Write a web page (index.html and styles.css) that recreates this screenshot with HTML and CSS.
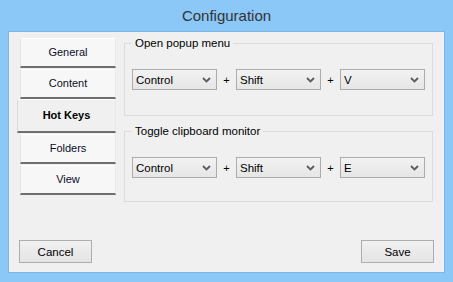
FILE: index.html
```html
<!DOCTYPE html>
<html>
<head>
<meta charset="utf-8">
<title>Configuration</title>
<link rel="stylesheet" href="styles.css">
</head>
<body>
<div class="window">
	<div class="titlebar">Configuration</div>
	<div class="client">
		<div class="main">
			<!-- left side tab list -->
			<div class="tabs">
				<div class="tab">General</div>
				<div class="tab">Content</div>
				<div class="tab selected">Hot Keys</div>
				<div class="tab">Folders</div>
				<div class="tab">View</div>
			</div>
			<div class="pages">
				<fieldset class="group">
					<legend>Open popup menu</legend>
					<div class="keys">
						<div class="combo"><span>Control</span><svg width="9" height="6" viewBox="0 0 9 6"><polyline points="1,1 4.5,4.5 8,1" /></svg></div>
						<span class="plus">+</span>
						<div class="combo"><span>Shift</span><svg width="9" height="6" viewBox="0 0 9 6"><polyline points="1,1 4.5,4.5 8,1" /></svg></div>
						<span class="plus">+</span>
						<div class="combo"><span>V</span><svg width="9" height="6" viewBox="0 0 9 6"><polyline points="1,1 4.5,4.5 8,1" /></svg></div>
					</div>
				</fieldset>
				<fieldset class="group second">
					<legend>Toggle clipboard monitor</legend>
					<div class="keys">
						<div class="combo"><span>Control</span><svg width="9" height="6" viewBox="0 0 9 6"><polyline points="1,1 4.5,4.5 8,1" /></svg></div>
						<span class="plus">+</span>
						<div class="combo"><span>Shift</span><svg width="9" height="6" viewBox="0 0 9 6"><polyline points="1,1 4.5,4.5 8,1" /></svg></div>
						<span class="plus">+</span>
						<div class="combo"><span>E</span><svg width="9" height="6" viewBox="0 0 9 6"><polyline points="1,1 4.5,4.5 8,1" /></svg></div>
					</div>
				</fieldset>
			</div>
		</div>
		<div class="actions">
			<button class="btn">Cancel</button>
			<button class="btn">Save</button>
		</div>
	</div>
</div>
</body>
</html>
```

FILE: styles.css
```css
html, body {
	margin: 0;
	padding: 0;
}

body {
	background: #8bc7f7;
	font-family: "Liberation Sans", Arial, sans-serif;
	font-size: 11px;
	color: #000;
}

.window {
	width: 453px;
	height: 282px;
	box-sizing: border-box;
	background: #8bc7f7;
	display: flex;
	flex-direction: column;
	padding: 0 8px 9px 8px;
}

.titlebar {
	height: 31px;
	line-height: 31px;
	text-align: center;
	font-size: 15px;
	color: #333333;
	flex: none;
}

.client {
	flex: 1;
	background: #f0f0f0;
	border: 1px solid #7fb5e6;
	padding: 0 11px 9px 11px;
	display: flex;
	flex-direction: column;
}

.main {
	display: flex;
	gap: 8px;
	padding-top: 5px;
}

/* tab list */
.tabs {
	width: 96px;
	flex: none;
	padding-top: 1px;
}

.tab {
	height: 27px;
	line-height: 27px;
	text-align: center;
	color: #0c0c28;
	background: #f7f7f7;
	border-top: 1px solid #ffffff;
	border-left: 1px solid #e3e3e3;
	border-right: 1px solid #e8e8e8;
	border-bottom: 2px solid #6f6f6f;
	margin-bottom: 1px;
	box-sizing: content-box;
}

.tab.selected {
	background: #f0f0f0;
	font-weight: bold;
	color: #000;
	height: 31px;
	line-height: 31px;
	margin-top: -1px;
	margin-left: -3px;
	border-left: 1px solid #dadada;
}

.pages {
	flex: 1;
}

/* group boxes */
.group {
	margin: 0;
	border: 1px solid #dcdcdc;
	padding: 19px 7px 25px 7px;
}

.group.second {
	margin-top: 9px;
	padding-bottom: 23px;
}

.group legend {
	padding: 0 3px;
	font-size: 11.5px;
	line-height: 13px;
}

.keys {
	display: flex;
	align-items: center;
}

.combo {
	width: 85px;
	height: 21px;
	box-sizing: border-box;
	border: 1px solid #acacac;
	background: linear-gradient(to bottom, #f2f2f2, #e6e6e6);
	display: flex;
	align-items: center;
	justify-content: space-between;
	padding: 0 5px 0 3px;
	font-size: 11.5px;
}

.combo svg {
	fill: none;
	stroke: #5c5c5c;
	stroke-width: 1.8;
}

.plus {
	width: 19px;
	text-align: center;
	font-size: 11px;
}

/* bottom buttons */
.actions {
	margin-top: auto;
	display: flex;
	justify-content: space-between;
	margin-left: -1px;
	margin-right: -1px;
}

.btn {
	width: 73px;
	height: 23px;
	border: 1px solid #adadad;
	background: linear-gradient(to bottom, #f0f0f0, #e5e5e5);
	font-family: "Liberation Sans", Arial, sans-serif;
	font-size: 11.5px;
	color: #000;
	padding: 0;
}
```
